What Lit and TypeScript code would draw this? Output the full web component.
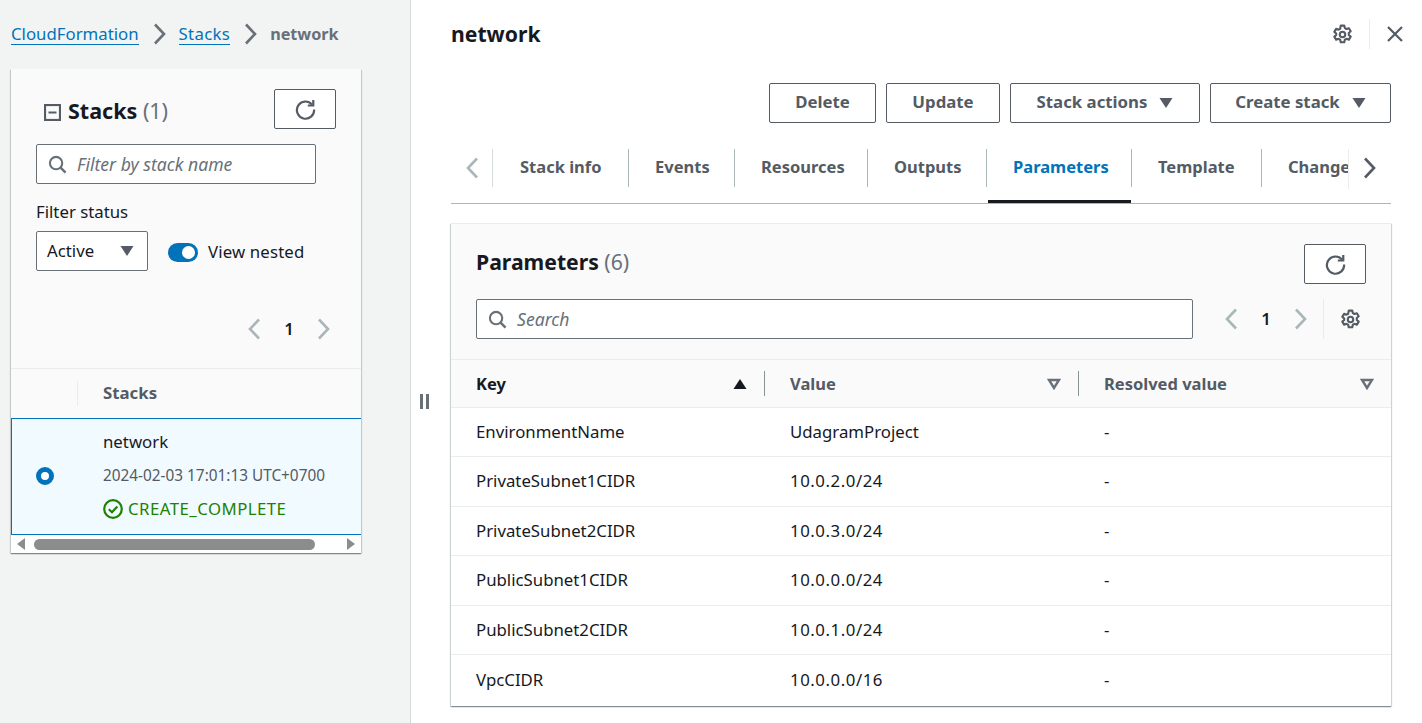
import { LitElement, css, html, svg } from 'lit';
import { customElement } from 'lit/decorators.js';

const chevronLeft = svg`<path d="M14 1.5 L5 11 L14 20.5" fill="none" stroke="currentColor" stroke-width="2.6" />`;
const chevronRight = svg`<path d="M6 1.5 L15 11 L6 20.5" fill="none" stroke="currentColor" stroke-width="2.6" />`;

const chev = (dir: 'left' | 'right') =>
  html`<svg viewBox="0 0 20 22" width="20" height="22">${dir === 'left' ? chevronLeft : chevronRight}</svg>`;

const gear = html`<svg class="gear" viewBox="0 0 20 20" width="21" height="21">
  <path d="M8.3 1.5h3.4l.5 2.4 1.6.9 2.3-.8 1.7 2.9-1.8 1.6v1.9l1.8 1.6-1.7 2.9-2.3-.8-1.6.9-.5 2.4H8.3l-.5-2.4-1.6-.9-2.3.8-1.7-2.9 1.8-1.6V9.1L2.2 7.5l1.7-2.9 2.3.8 1.6-.9z" fill="none" stroke="currentColor" stroke-width="2" stroke-linejoin="round" />
  <circle cx="10" cy="10" r="2.6" fill="none" stroke="currentColor" stroke-width="2" />
</svg>`;

const refresh = html`<svg viewBox="0 0 20 20" width="21" height="21">
  <path d="M16.2 5.2A8.2 8.2 0 1 0 18.2 10" fill="none" stroke="currentColor" stroke-width="2.1" />
  <path d="M17.4 1v5.2h-5.2" fill="none" stroke="currentColor" stroke-width="2.1" />
</svg>`;

const search = html`<svg class="search-icon" viewBox="0 0 20 20" width="19" height="19">
  <circle cx="8.5" cy="8.5" r="6.5" fill="none" stroke="currentColor" stroke-width="2.2" />
  <path d="M13 13 L18.5 18.5" fill="none" stroke="currentColor" stroke-width="2.6" />
</svg>`;

const caret = html`<svg class="caret" viewBox="0 0 14 12" width="14" height="12"><path d="M0.5 1 H13.5 L7 11z" fill="currentColor" /></svg>`;

const params = [
  ['EnvironmentName', 'UdagramProject'],
  ['PrivateSubnet1CIDR', '10.0.2.0/24'],
  ['PrivateSubnet2CIDR', '10.0.3.0/24'],
  ['PublicSubnet1CIDR', '10.0.0.0/24'],
  ['PublicSubnet2CIDR', '10.0.1.0/24'],
  ['VpcCIDR', '10.0.0.0/16'],
];

const buttons = [
  { label: 'Delete', width: 107 },
  { label: 'Update', width: 114 },
  { label: 'Stack actions', width: 190, menu: true },
  { label: 'Create stack', width: 181, menu: true },
];

const tabs = [
  { label: 'Stack info', width: 135 },
  { label: 'Events', width: 106 },
  { label: 'Resources', width: 133 },
  { label: 'Outputs', width: 119 },
  { label: 'Parameters', width: 145, active: true },
  { label: 'Template', width: 130 },
  { label: 'Change sets', width: 140 },
];

@customElement('app-root')
export class AppRoot extends LitElement {
  static styles = css`
    :host {
      display: flex;
      width: 1422px;
      height: 723px;
      overflow: hidden;
      background: #fff;
      color: #16191f;
      font-family: 'Noto Sans', 'Open Sans', sans-serif;
      font-size: 16.8px;
      line-height: 24px;
    }

    svg {
      display: block;
      flex: none;
    }

    .left {
      width: 411px;
      flex: none;
      box-sizing: border-box;
      padding: 22px 0 0 11px;
      background: #f2f3f3;
      border-right: 1px solid #d5dbdb;
    }

    .crumbs {
      display: flex;
      align-items: center;
      height: 24px;
      color: #687078;
    }

    .crumbs a {
      color: #0073bb;
      text-decoration: none;
      border-bottom: 1px solid #0073bb;
      line-height: 21px;
    }

    .crumbs svg {
      margin: 0 10px 0 10px;
      color: #687078;
    }

    .crumbs a + svg + a {
      letter-spacing: 0.3px;
    }

    .crumbs b {
      color: #687078;
      font-weight: 700;
      font-size: 16.2px;
    }

    .stack-card {
      width: 350px;
      height: 484px;
      margin-top: 23px;
      background: #fafafa;
      box-shadow: 0 1px 1px 0 rgba(0, 28, 36, 0.3), 1px 1px 1px 0 rgba(0, 28, 36, 0.15), -1px 1px 1px 0 rgba(0, 28, 36, 0.15);
      display: flex;
      flex-direction: column;
    }

    .stack-top {
      height: 300px;
      flex: none;
      box-sizing: border-box;
      padding: 20px 25px 0;
      border-bottom: 1px solid #eaeded;
    }

    .title-row {
      display: flex;
      justify-content: space-between;
      height: 40px;
    }

    .title {
      display: flex;
      align-items: center;
      gap: 7px;
      margin-left: 8px;
      font-size: 21.5px;
      font-weight: 700;
      padding-top: 3px;
    }

    .title span,
    .heading span {
      font-weight: 400;
      color: #687078;
    }

    .collapse {
      color: #545b64;
      margin-top: 4px;
    }

    .refresh {
      display: flex;
      align-items: center;
      justify-content: center;
      box-sizing: border-box;
      width: 62px;
      height: 40px;
      background: #fff;
      border: 1px solid #545b64;
      border-radius: 2px;
      color: #545b64;
    }

    .input {
      display: flex;
      align-items: center;
      gap: 10px;
      box-sizing: border-box;
      height: 40px;
      padding: 0 11px 1px;
      background: #fff;
      border: 1px solid #687078;
      border-radius: 2px;
      color: #687078;
      font-style: italic;
      font-size: 17.6px;
    }

    .filter {
      width: 280px;
      margin-top: 15px;
    }

    .search-icon {
      color: #687078;
      margin-top: 1px;
    }

    .label {
      margin-top: 16px;
      height: 24px;
    }

    .filter-row {
      display: flex;
      align-items: center;
      margin-top: 7px;
      height: 40px;
    }

    .select {
      display: flex;
      align-items: center;
      justify-content: space-between;
      box-sizing: border-box;
      width: 112px;
      height: 40px;
      padding: 0 13px 0 10px;
      background: #fff;
      border: 1px solid #687078;
      border-radius: 2px;
    }

    .caret {
      color: #545b64;
    }

    .toggle {
      position: relative;
      width: 30px;
      height: 19px;
      margin: 3px 10px 0 20px;
      border-radius: 10px;
      background: #0073bb;
    }

    .toggle::after {
      content: '';
      position: absolute;
      top: 3px;
      right: 3px;
      width: 13px;
      height: 13px;
      border-radius: 50%;
      background: #fff;
    }

    .nested {
      padding-top: 2px;
      letter-spacing: 0.15px;
    }

    .pager {
      display: flex;
      align-items: center;
      color: #aab7b8;
    }

    .pager b {
      width: 24px;
      margin: 0 12px;
      text-align: center;
      color: #16191f;
      font-weight: 600;
    }

    .stack-pager {
      justify-content: flex-end;
      margin: 38px 3px 0 0;
      height: 40px;
    }

    .stack-head {
      height: 49px;
      flex: none;
      display: flex;
      align-items: center;
      box-sizing: border-box;
      padding-bottom: 2px;
      color: #545b64;
      font-weight: 700;
    }

    .stack-head i {
      width: 1px;
      height: 25px;
      margin: 2px 25px 0 66px;
      background: #eaeded;
    }

    .stack-row {
      height: 117px;
      flex: none;
      box-sizing: border-box;
      display: flex;
      background: #f1faff;
      border: 1px solid #0073bb;
      border-right: none;
    }

    .radio {
      box-sizing: border-box;
      width: 18px;
      height: 18px;
      margin: 48px 0 0 24px;
      border-radius: 50%;
      border: 5px solid #0073bb;
      background: #fff;
    }

    .stack-info {
      margin-left: 49px;
      padding-top: 11px;
    }

    .when {
      margin-top: 9px;
      font-size: 15.35px;
      color: #545b64;
    }

    .status {
      display: flex;
      align-items: center;
      gap: 5px;
      margin-top: 10px;
      color: #1d8102;
      letter-spacing: 0.45px;
    }

    .scrollbar {
      flex: 1;
      display: flex;
      align-items: center;
      background: #fff;
      padding: 0 6px;
      gap: 8px;
      color: #8c8c8c;
    }

    .thumb {
      width: 281px;
      height: 11px;
      margin-left: 1px;
      border-radius: 6px;
      background: #8c8c8c;
    }

    .scrollbar svg:last-child {
      margin-left: auto;
    }

    .resizer {
      display: flex;
      gap: 3px;
      position: absolute;
      left: 420px;
      top: 394px;
    }

    .resizer i {
      width: 3px;
      height: 15px;
      background: #687078;
    }

    .right {
      flex: 1;
      min-width: 0;
      padding: 0 31px 0 40px;
    }

    .top-row {
      display: flex;
      align-items: center;
      justify-content: space-between;
      height: 68px;
    }

    .top-row h1 {
      margin: 0;
      font-size: 21.2px;
      font-weight: 700;
    }

    .top-actions {
      display: flex;
      align-items: center;
      color: #545b64;
      margin-right: -13px;
    }

    .top-actions i {
      width: 1px;
      height: 30px;
      margin: 0 16px;
      background: #eaeded;
    }

    .actions {
      display: flex;
      justify-content: flex-end;
      gap: 10px;
      margin-top: 15px;
    }

    .btn {
      display: flex;
      align-items: center;
      justify-content: center;
      gap: 12px;
      box-sizing: border-box;
      height: 40px;
      padding-bottom: 2px;
      background: #fff;
      border: 1px solid #545b64;
      border-radius: 2px;
      color: #545b64;
      font-weight: 700;
    }

    .btn .caret {
      margin-top: 2px;
    }

    .tabs {
      display: flex;
      align-items: stretch;
      height: 81px;
      box-sizing: border-box;
      padding-top: 26px;
      border-bottom: 1px solid #aab7b8;
      color: #545b64;
    }

    .tab-prev {
      width: 42px;
      height: 38px;
      flex: none;
      display: flex;
      align-items: center;
      padding-left: 12px;
      box-sizing: border-box;
      color: #aab7b8;
      border-right: 1px solid #d5dbdb;
    }

    .tab-list {
      display: flex;
      width: 855px;
      flex: none;
      overflow: hidden;
      border-right: 1px solid #eaeded;
      height: 40px;
    }

    .tab {
      position: relative;
      flex: none;
      display: flex;
      box-sizing: border-box;
      height: 54px;
      padding-left: 27px;
      font-weight: 700;
      font-size: 16.5px;
      white-space: nowrap;
    }

    .tab span {
      line-height: 36px;
    }

    .tab + .tab::before {
      content: '';
      position: absolute;
      left: 0;
      top: 0;
      width: 1px;
      height: 38px;
      background: #aab7b8;
    }

    .tab.active {
      color: #0073bb;
    }

    .tab-next {
      display: flex;
      align-items: center;
      height: 38px;
      margin-left: 10px;
    }

    .underline {
      height: 3px;
      width: 143px;
      margin: -4px 0 0 537px;
      background: #16191f;
      position: relative;
    }

    .param-card {
      height: 483px;
      margin-top: 20px;
      box-shadow: 0 1px 1px 0 rgba(0, 28, 36, 0.3), 1px 1px 1px 0 rgba(0, 28, 36, 0.15), -1px 1px 1px 0 rgba(0, 28, 36, 0.15);
      border-top: 1px solid #eaeded;
      box-sizing: border-box;
    }

    .param-top {
      height: 136px;
      box-sizing: border-box;
      padding: 20px 25px 0;
      background: #fafafa;
      border-bottom: 1px solid #eaeded;
    }

    .heading-row {
      display: flex;
      justify-content: space-between;
      height: 40px;
    }

    .heading {
      font-size: 21.2px;
      font-weight: 700;
      line-height: 36px;
    }

    .search-row {
      display: flex;
      align-items: center;
      margin-top: 15px;
    }

    .search-box {
      width: 717px;
      flex: none;
    }

    .param-pager {
      margin-left: 29px;
    }

    .param-pager i {
      width: 1px;
      height: 40px;
      margin: 0 16px 0 13px;
      background: #eaeded;
    }

    .param-pager .gear {
      color: #545b64;
    }

    .row {
      display: grid;
      grid-template-columns: 314px 314px 1fr;
      align-items: center;
      box-sizing: border-box;
      height: 49.4px;
      border-bottom: 1px solid #eaeded;
    }

    .row:last-child {
      border-bottom: none;
    }

    .row > div {
      padding-left: 25px;
      padding-bottom: 0.2px;
    }

    .row > div.num {
      letter-spacing: 0.55px;
    }

    .row.head {
      height: 48px;
      background: #fafafa;
      color: #545b64;
      font-weight: 700;
      font-size: 16.5px;
    }

    .row.head > div {
      padding-bottom: 0;
    }

    .col {
      display: flex;
      align-items: center;
      position: relative;
      height: 25px;
    }

    .col .sort {
      position: absolute;
      right: 18px;
      top: 7px;
      color: #687078;
    }

    .col .first {
      color: #16191f;
    }

    .col.sep::after {
      content: '';
      position: absolute;
      right: 0;
      top: 0;
      width: 1px;
      height: 25px;
      background: #879596;
    }

    .col:last-child .sort {
      right: 17px;
    }
  `;

  render() {
    return html`
      <div class="left">
        <div class="crumbs">
          <a>CloudFormation</a>
          ${chev('right')}
          <a>Stacks</a>
          ${chev('right')}
          <b>network</b>
        </div>
        ${this.renderStackCard()}
      </div>
      <div class="resizer"><i></i><i></i></div>
      <div class="right">
        <div class="top-row">
          <h1>network</h1>
          <div class="top-actions">
            ${gear}
            <i></i>
            <svg viewBox="0 0 18 18" width="18" height="18">
              <path d="M2 2 L16 16 M16 2 L2 16" fill="none" stroke="currentColor" stroke-width="2.2" />
            </svg>
          </div>
        </div>
        <div class="actions">
          ${buttons.map(
            (b) => html`<div class="btn" style="width:${b.width}px">${b.label} ${b.menu ? caret : ''}</div>`,
          )}
        </div>
        <div class="tabs">
          <div class="tab-prev">${chev('left')}</div>
          <div class="tab-list">
            ${tabs.map(
              (t) => html`<div class="tab ${t.active ? 'active' : ''}" style="width:${t.width}px"><span>${t.label}</span></div>`,
            )}
          </div>
          <div class="tab-next">${chev('right')}</div>
        </div>
        <div class="underline"></div>
        ${this.renderParams()}
      </div>
    `;
  }

  renderStackCard() {
    return html`
      <div class="stack-card">
        <div class="stack-top">
          <div class="title-row">
            <div class="title">
              <svg class="collapse" viewBox="0 0 17 17" width="17" height="17">
                <rect x="1" y="1" width="15" height="15" fill="none" stroke="currentColor" stroke-width="2.2" />
                <path d="M4.5 8.5 H12.5" stroke="currentColor" stroke-width="2" />
              </svg>
              <div>Stacks <span>(1)</span></div>
            </div>
            <div class="refresh">${refresh}</div>
          </div>
          <div class="input filter">${search}Filter by stack name</div>
          <div class="label">Filter status</div>
          <div class="filter-row">
            <div class="select">Active ${caret}</div>
            <div class="toggle"></div>
            <div class="nested">View nested</div>
          </div>
          <div class="pager stack-pager">
            ${chev('left')}
            <b>1</b>
            ${chev('right')}
          </div>
        </div>
        <div class="stack-head"><i></i>Stacks</div>
        <div class="stack-row">
          <div class="radio"></div>
          <div class="stack-info">
            <div>network</div>
            <div class="when">2024-02-03 17:01:13 UTC+0700</div>
            <div class="status">
              <svg viewBox="0 0 20 20" width="20" height="20">
                <circle cx="10" cy="10" r="8.8" fill="none" stroke="currentColor" stroke-width="2.2" />
                <path d="M5.8 10.2 L9 13.2 L14.4 7.4" fill="none" stroke="currentColor" stroke-width="2.2" />
              </svg>
              CREATE_COMPLETE
            </div>
          </div>
        </div>
        <div class="scrollbar">
          <svg viewBox="0 0 8 12" width="8" height="12"><path d="M8 0 V12 L0 6z" fill="#8c8c8c" /></svg>
          <div class="thumb"></div>
          <svg viewBox="0 0 8 12" width="8" height="12"><path d="M0 0 V12 L8 6z" fill="#8c8c8c" /></svg>
        </div>
      </div>
    `;
  }

  renderParams() {
    return html`
      <div class="param-card">
        <div class="param-top">
          <div class="heading-row">
            <div class="heading">Parameters <span>(6)</span></div>
            <div class="refresh">${refresh}</div>
          </div>
          <div class="search-row">
            <div class="input search-box">${search}Search</div>
            <div class="pager param-pager">
              ${chev('left')}
              <b>1</b>
              ${chev('right')}
              <i></i>
              ${gear}
            </div>
          </div>
        </div>
        <div class="row head">
          <div class="col sep">
            <span class="first">Key</span>
            <svg class="sort" viewBox="0 0 14 12" width="14" height="12" style="color:#16191f"><path d="M7 1 L13.5 11 H0.5z" fill="currentColor" /></svg>
          </div>
          <div class="col sep">
            Value
            <svg class="sort" viewBox="0 0 14 12" width="14" height="12"><path d="M2 2 H12 L7 10z" fill="none" stroke="currentColor" stroke-width="2.4" /></svg>
          </div>
          <div class="col">
            Resolved value
            <svg class="sort" viewBox="0 0 14 12" width="14" height="12"><path d="M2 2 H12 L7 10z" fill="none" stroke="currentColor" stroke-width="2.4" /></svg>
          </div>
        </div>
        ${params.map(
          ([k, v]) => html`<div class="row">
            <div>${k}</div>
            <div class="${/^\d/.test(v) ? 'num' : ''}">${v}</div>
            <div>-</div>
          </div>`,
        )}
      </div>
    `;
  }
}

declare global {
  interface HTMLElementTagNameMap {
    'app-root': AppRoot;
  }
}
